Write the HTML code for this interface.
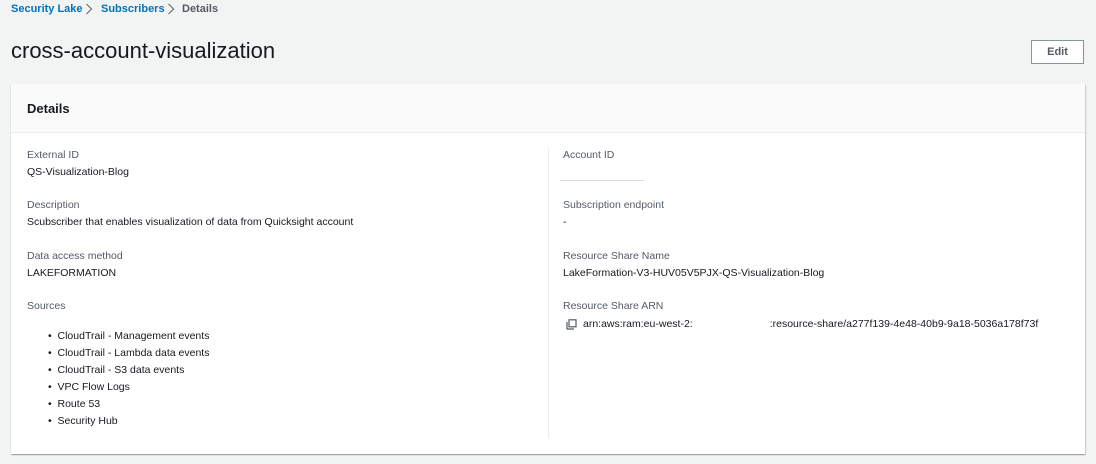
<!DOCTYPE html>
<html><head><style>
*{margin:0;padding:0;box-sizing:border-box}
body{width:1096px;height:464px;background:#f2f3f3;font-family:"Liberation Sans",Arial,sans-serif;color:#16191f;position:relative;overflow:hidden}
.a{position:absolute;white-space:nowrap}
.bc{top:2px;font-size:11px;font-weight:bold;line-height:14px}
.lbl{font-size:10.5px;color:#545b64}
.val{font-size:10.5px;color:#16191f}
</style></head><body>
<div class="a bc" style="left:11px;color:#0073bb">Security Lake</div>
<svg class="a" style="left:85px;top:3px" width="8" height="12" viewBox="0 0 8 12"><path d="M1.5 1l5 5-5 5" fill="none" stroke="#687078" stroke-width="1.2"/></svg>
<div class="a bc" style="left:101px;color:#0073bb">Subscribers</div>
<svg class="a" style="left:167px;top:3px" width="8" height="12" viewBox="0 0 8 12"><path d="M1.5 1l5 5-5 5" fill="none" stroke="#687078" stroke-width="1.2"/></svg>
<div class="a bc" style="left:182px;color:#545b64">Details</div>
<div class="a" style="left:11px;top:38px;font-size:22px;line-height:26px;color:#16191f">cross-account-visualization</div>
<div class="a" style="left:1031px;top:40px;width:53px;height:24px;border:1px solid #879596;background:#fff;font-size:11px;font-weight:bold;color:#545b64;text-align:center;line-height:22px">Edit</div>
<div class="a" style="left:11px;top:84px;width:1074px;height:370px;background:#fff;box-shadow:0 1px 1px rgba(0,28,36,.3),1px 1px 1px rgba(0,28,36,.15)"></div>
<div class="a" style="left:11px;top:84px;width:1074px;height:49px;background:#fafafa;border-bottom:1px solid #eaeded"></div>
<div class="a" style="left:27px;top:101px;font-size:13px;font-weight:bold">Details</div>
<div class="a" style="left:548px;top:148px;width:1px;height:290px;background:#eaeded"></div>
<div class="a lbl" style="left:27px;top:149px">External ID</div>
<div class="a val" style="left:27px;top:166px">QS-Visualization-Blog</div>
<div class="a lbl" style="left:27px;top:199px">Description</div>
<div class="a val" style="left:27px;top:216px">Scubscriber that enables visualization of data from Quicksight account</div>
<div class="a lbl" style="left:27px;top:250px">Data access method</div>
<div class="a val" style="left:27px;top:267px">LAKEFORMATION</div>
<div class="a lbl" style="left:27px;top:300px">Sources</div>
<div class="a val" style="left:48px;top:328px;line-height:17px">•&nbsp; CloudTrail - Management events<br>•&nbsp; CloudTrail - Lambda data events<br>•&nbsp; CloudTrail - S3 data events<br>•&nbsp; VPC Flow Logs<br>•&nbsp; Route 53<br>•&nbsp; Security Hub</div>
<div class="a lbl" style="left:563px;top:149px">Account ID</div>
<div class="a" style="left:560px;top:180px;width:84px;height:1px;background:#d5dbdb"></div>
<div class="a lbl" style="left:563px;top:199px">Subscription endpoint</div>
<div class="a val" style="left:563px;top:216px">-</div>
<div class="a lbl" style="left:563px;top:250px">Resource Share Name</div>
<div class="a val" style="left:563px;top:267px">LakeFormation-V3-HUV05V5PJX-QS-Visualization-Blog</div>
<div class="a lbl" style="left:563px;top:300px">Resource Share ARN</div>
<svg class="a" style="left:566px;top:319px" width="11" height="11" viewBox="0 0 11 11"><rect x="3" y="0.8" width="7" height="7" fill="none" stroke="#545b64" stroke-width="1.2"/><path d="M1 3v7h7" fill="none" stroke="#545b64" stroke-width="1.2"/></svg>
<div class="a val" style="left:583px;top:318px;color:#16191f">arn:aws:ram:eu-west-2:<span style="display:inline-block;width:77px"></span>:resource-share/a277f139-4e48-40b9-9a18-5036a178f73f</div>
</body></html>
